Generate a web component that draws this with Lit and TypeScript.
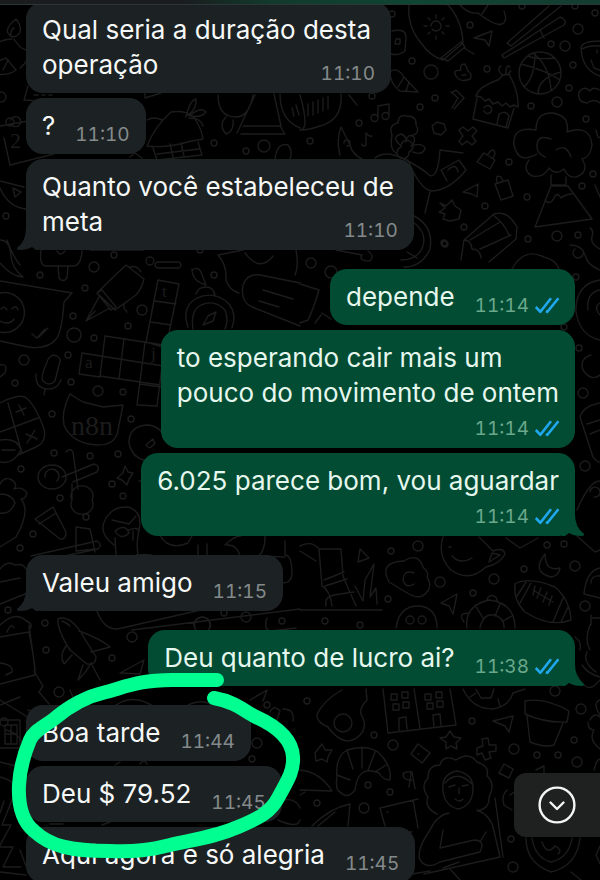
import { LitElement, html, css, svg, nothing } from "lit";
import { customElement, property } from "lit/decorators.js";
import { classMap } from "lit/directives/class-map.js";

interface Message {
  lines: string[];
  time: string;
  out?: boolean;
  tail?: boolean;
  below?: boolean;
}

const MESSAGES: Message[] = [
  { lines: ["Qual seria a duração desta", "operação"], time: "11:10" },
  { lines: ["?"], time: "11:10" },
  { lines: ["Quanto você estabeleceu de", "meta"], time: "11:10", tail: true },
  { lines: ["depende"], time: "11:14", out: true },
  { lines: ["to esperando cair mais um", "pouco do movimento de ontem"], time: "11:14", out: true, below: true },
  { lines: ["6.025 parece bom, vou aguardar"], time: "11:14", out: true, below: true, tail: true },
  { lines: ["Valeu amigo"], time: "11:15", tail: true },
  { lines: ["Deu quanto de lucro ai?"], time: "11:38", out: true, tail: true },
  { lines: ["Boa tarde"], time: "11:44" },
  { lines: ["Deu $ 79.52"], time: "11:45" },
  { lines: ["Aqui agora e só alegria"], time: "11:45" },
];

/* Small bubbles scattered between the doodles: x, y, radius. */
const DOTS: number[][] = [
  [392, 14, 3], [470, 25, 3], [522, 6, 3], [575, 6, 3], [595, 13, 3], [578, 29, 5], [551, 44, 3], [565, 46, 5],
  [412, 61, 3], [431, 72, 7], [487, 69, 3], [573, 65, 3], [569, 88, 3], [435, 98, 3], [420, 107, 3], [372, 96, 3],
  [531, 106, 3], [557, 102, 5], [586, 119, 3], [359, 123, 3], [310, 141, 3], [509, 162, 3], [593, 174, 3],
  [582, 186, 3], [527, 197, 3], [485, 206, 3], [464, 227, 3], [444, 243, 3], [528, 239, 3], [557, 236, 5], [578, 235, 3],
  [1, 97, 5], [10, 122, 4], [214, 143, 3], [246, 151, 3], [264, 146, 6], [6, 216, 3], [200, 250, 3], [114, 255, 3],
  [94, 267, 5], [150, 261, 4], [40, 275, 3], [85, 288, 3], [214, 275, 3], [142, 310, 5], [73, 316, 3], [128, 326, 3],
  [74, 335, 7], [94, 338, 3], [24, 360, 5], [68, 355, 3], [15, 383, 3], [71, 382, 3], [98, 391, 5], [123, 392, 3],
  [52, 414, 3], [131, 419, 3], [54, 453, 3], [90, 456, 3], [118, 454, 3], [21, 469, 3], [112, 484, 3], [123, 496, 3],
  [60, 498, 3], [311, 263, 5], [331, 272, 6], [445, 244, 3], [576, 277, 3], [564, 327, 3], [579, 348, 3], [583, 393, 5],
  [585, 466, 5], [86, 517, 3], [33, 534, 3], [20, 548, 3], [8, 610, 3], [45, 623, 3], [46, 650, 3], [132, 637, 5],
  [112, 658, 3], [246, 617, 5], [202, 625, 8], [224, 613, 3], [282, 621, 3], [59, 692, 5], [391, 551, 3], [418, 546, 5],
  [547, 545, 3], [564, 544, 3], [575, 566, 5], [524, 569, 3], [494, 579, 5], [440, 582, 5], [473, 593, 3], [388, 599, 3],
  [585, 606, 5], [325, 621, 3], [360, 625, 3], [307, 701, 3], [374, 735, 3], [393, 745, 5], [472, 721, 3], [555, 691, 5],
  [581, 709, 5], [514, 749, 5], [537, 755, 3], [558, 755, 3], [574, 740, 3], [577, 762, 5], [390, 792, 3], [368, 785, 3],
  [364, 808, 5], [317, 803, 3], [257, 743, 5], [252, 759, 3], [267, 705, 3], [511, 839, 3], [513, 867, 5], [4, 722, 4],
];

const DOODLES: string[] = [
  /* left edge, top */
  "M8 33 Q5 28 16 19 Q23 28 19 34 Q12 40 8 33 M12 39 Q-4 40 -6 48 M14 39 Q20 49 26 50 M11 37 Q10 30 14 28 M-4 62 L6 58 L16 70 Q8 76 -4 74 M3 70 L8 60 M20 68 Q25 64 26 61",
  "M28 86 L24 100 L54 102 M34 95 h4 m4 0 h3 m4 0 h3 M145 90 l0 8 l16 -5",
  "M0 126 L28 121 M4 138 L10 165 L54 154 M11 120 a5 5 0 1 1 1 5 M0 188 Q8 207 26 209 M0 181 L24 187 M13 188 l8 4 l-6 5 z",
  "M0 240 Q10 240 11 256 Q12 268 23 277 Q12 277 0 263 M7 240 Q12 255 20 265",
  "M0 281 L72 293 L64 302 Q62 330 57 338 Q48 350 28 347 L0 341 M0 293 a20 20 0 1 1 0 39 M1 309 q3 -4 6 1 M12 309 q4 -5 6 1 M0 321 q9 5 14 -2 M32 334 l5 4 l8 -9 M39 337 l9 -9",
  /* thatched hut and palm */
  "M147 146 Q155 126 171 112 Q185 110 194 117 Q202 130 203 139 Q190 141 180 144 Q160 148 147 146 M153 148 l4 12 l45 -5 l-4 -13 M170 144 l3 13 M181 143 l3 13 M157 154 l42 -5 M186 117 q4 -17 10 -18 q1 10 -8 16 M189 116 q12 -10 17 -4 q-5 6 -15 4 M189 118 q12 0 14 8 M147 120 q7 -4 15 0 M130 157 l5 -4 l7 5",
  "M218 95 q0 22 18 22 q13 0 17 -22 M226 117 q-8 8 0 17 q8 -2 7 -14 M255 95 l-18 38 M241 134 h44 l-5 -8 h-37 M274 94 l7 32 M280 94 q0 26 20 34 M292 108 l2 8 M296 105 l3 10",
  "M300 95 Q310 130 300 130 M308 104 v12 M313 102 v13 M318 100 v13 M323 98 v13 M328 96 v13 M341 94 Q343 120 320 126 Q309 130 300 130",
  "M275 159 q2 -17 13 -14 q5 5 2 14 M144 250 L90 250",
  /* lightbulb with sun, star, chopsticks */
  "M409 5 Q407 26 421 43 Q430 56 443 60 L463 43 Q462 20 448 5 M441 58 l20 -16 l4 5 l-17 14 z M464 48 l10 6 M431 26 a5 5 0 1 1 1 3 M436 15 v3 M436 36 v3 M424 26 h3 M446 26 h3 M428 18 l2 2 M444 18 l-2 2 M428 34 l2 -2 M444 34 l-2 -2",
  "M474 38 L492 31 L489 46 L485 40 Z M460 5 q8 9 18 8 q18 14 24 11 q6 -3 2 -13 M482 14 l6 -9",
  "M507 43 L549 6 M511 46 L561 6 M507 43 l4 3 M502 55 L560 17 q8 3 4 8 L504 58 z M540 30 l4 8",
  "M519 73 a21 21 0 1 1 42 0 a21 21 0 1 1 -42 0 M521 64 Q545 70 560 80 M533 53 Q550 66 551 91 M528 56 Q538 60 555 58 M524 87 Q535 77 535 53 M538 94 Q538 78 561 72",
  "M600 41 Q582 41 581 48 Q582 70 600 76 M582 49 Q590 45 600 46 M591 60 l3 8 l6 2 M597 50 v3",
  "M392 31 Q406 28 406 37 L405 51 Q399 56 391 54 M396 39 h4 v5 h-5 z M391 71 Q398 67 404 77 L418 92 L400 91 Q392 85 391 78 M404 77 l-6 10 M409 82 l-3 9",
  "M456 76 q-4 -6 5 -6 q-2 -6 4 -6 l3 7 q5 4 2 8 q-10 4 -14 -3 M462 75 h4",
  /* round hut */
  "M476 96 Q478 87 498 80 L503 75 L509 74 Q519 92 518 107 l-4 -2 l-4 2 l-4 -4 l-4 3 l-4 -4 l-5 2 l-4 -5 l-4 2 l-4 -4 z M477 98 L473 119 L508 128 L514 108 M484 108 a4 4 0 1 1 0 3 M497 124 l2 -10 q7 -4 10 2 l-3 11 M502 75 q-6 -7 -1 -9 M506 74 q0 -11 4 -7 M508 75 q4 -7 2 -3",
  "M600 90 q-7 -4 -10 1 q-6 -6 -11 1 q-2 10 8 11 q7 -5 13 0 M596 130 q2 10 4 7",
  /* notes and flower */
  "M378 118 v-12 l11 -2 v12 M371 118 a3 3 0 1 0 7 0 a3 3 0 1 0 -7 0 M382 116 a3 3 0 1 0 7 0 a3 3 0 1 0 -7 0 M366 145 v-12 q3 4 6 3 M362 144 a2 2 0 1 0 4 0 M349 95 l8 10",
  "M392 135 q-4 -10 6 -12 q0 -9 9 -7 q10 0 9 9 q5 8 -5 11 M401 147 a6 6 0 1 1 8 5 a6 6 0 1 1 -8 -5 M400 145 q-9 -8 1 -11 q6 2 5 8 q2 -10 8 -5 q2 5 -3 9 q10 -4 14 2 q-2 8 -12 4 M392 135 q-3 14 4 18",
  "M340 155 Q336 140 341 127 L350 145 Q352 154 362 159 M344 143 a3 3 0 1 1 3 3",
  "M375 158 Q385 150 402 158 Q422 168 429 175 Q438 180 440 150 L463 153 M408 160 Q420 190 432 191 Q450 190 466 170 L459 160 L441 170 l6 11 M448 170 q8 -8 10 2 M430 192 L425 213",
  "M452 93 q4 -5 7 0 l5 5 l-10 11 M451 92 l7 6 l-6 10",
  "M432 126 l5 -4 l7 2 l2 6 l-5 5 l-7 -2 z M459 130 l4 -3 l5 4 l5 -4 l4 4 l-5 5 l4 5 l-4 4 l-5 -4 l-5 4 l-3 -4 l4 -5 z",
  "M477 162 l7 -9 l11 7 l-5 9 z M488 154 q6 -8 7 0 l-2 4 M495 184 l13 -4 l5 16 l-12 4 z M497 182 q-2 -8 4 -5 l2 4 M463 192 l15 -8 l-1 13 l-5 -3 z",
  /* blossom tree and volcano */
  "M537 154 Q518 165 514 145 Q512 126 536 130 Q536 112 553 113 Q570 116 567 132 Q590 124 592 145 Q590 158 582 159 Q590 172 576 177 Q568 178 564 169 Q556 176 549 168 Q544 178 532 176 Q522 170 529 160 M551 139 Q538 134 537 145 Q536 153 545 157 M556 150 Q566 143 571 157 M551 175 v10 h15 v-8",
  "M551 186 L535 227 L592 219 L568 186 Z M545 200 q5 6 9 -2 q3 -7 7 0 q5 -4 11 -4",
  "M440 203 l6 3 l6 -6 l3 6 l6 4 l-2 9 l-9 2 l-7 -2 l2 -5 l-6 -2 l6 -4 z",
  "M461 260 L464 240 L494 214 Q508 210 517 227 L516 239 L489 262 M470 240 L500 222 M480 249 L511 235 M464 240 q7 0 8 9 q8 0 9 9 M493 215 q11 8 16 20",
  "M412 215 q22 10 18 34 q-8 18 -26 18 M413 222 q14 10 10 24 q-5 14 -22 14 M407 252 l10 6 M336 250 l26 5 q-4 6 8 6 q5 -5 -2 -10",
  "M595 185 l5 12 M590 228 q4 2 2 9 q-2 7 8 12 M570 245 q12 0 15 10 q2 10 15 15 M575 249 a5 5 0 1 0 8 5 M512 269 q12 -22 32 -12 q12 3 15 12",
  /* ice pop, pen, crossword */
  "M41 250 q-2 16 5 16 h27 q8 0 9 -15 M58 266 l1 12 q4 5 8 0 l1 -12 M57 251 q3 6 8 0",
  "M105 285 L126 265 L144 279 Q142 288 136 295 L115 310 L97 293 Z M130 267 q7 -2 11 5 M97 293 l5 -3 l14 17 l-5 3 z M99 297 L86 321 L110 308 M86 321 l9 -10 M126 302 q-5 4 1 10",
  "M158 280 L179 284 L166 348 L146 342 Z M155 301 l21 3 M151 322 l20 3 M105 336 L170 346 M105 336 L100 376 L160 385 M82 353 L163 366 M82 353 l-3 21 l21 3 M124 339 l-5 40 M145 342 L137 405 L157 406 L162 366 M140 384 l21 3",
  "M157 262 h22 q4 3 0 6 h-22 q-4 -3 0 -6 M192 270 q6 -4 9 2 l5 13 M206 285 q-14 -4 -14 -16 M196 294 q2 -7 10 -7 q8 0 9 9 M188 327 q-7 -20 9 -29 q18 -8 32 6 q8 10 3 24 M193 329 q-3 -18 8 -24 q14 -6 24 5 q4 10 0 19 M203 325 l5 -9 l8 -4 l-3 9 z",
  "M218 255 L243 250 M218 255 q9 10 8 25 q3 10 13 13 M245 253 q15 20 28 3 M296 250 q3 16 -1 25 M243 285 q5 -14 22 -9 L300 283 M243 285 q-3 17 9 22 L300 326 M263 290 l30 9 M259 301 l20 6",
  "M300 284 L319 290 Q313 310 308 320 L300 323 M322 313 l9 6 M315 323 l6 -8",
  /* mic, cat, maths keys */
  "M47 362 q3 -9 10 -6 q5 3 2 9 l-4 16 q-6 6 -12 0 q-3 -3 4 -19 M36 374 q-1 14 11 15 q10 1 14 -9 M45 389 l-1 6",
  "M70 394 L83 402 L103 407 L123 405 L118 430 Q116 445 98 445 Q72 444 64 425 Q61 412 70 394",
  "M0 403 q17 -9 25 -6 q10 7 19 32 q3 13 -8 18 l-18 8 M8 403 l14 50 M0 432 l38 -14 M16 412 l10 -4 M19 405 l5 10 M26 434 l11 5 M35 430 l-8 13 M0 440 q17 -3 21 10 q-8 15 -21 12 M2 450 h13",
  "M38 477 a14 12 0 1 1 28 0 a14 12 0 1 1 -28 0 M45 477 a7 7 0 1 1 12 4 M66 452 q4 -5 7 0 l5 37 M62 477 l32 -13 q7 2 3 8 l-24 10 M72 484 v16 M72 500 a11 10 0 1 1 20 0 a11 10 0 1 1 -20 0",
  "M129 443 q0 -18 20 -18 q10 2 14 9 M129 443 q4 20 28 18 M146 445 l7 -6 l2 4 q-6 8 -9 2 M125 466 l3 6 l5 1 l-4 6 l-2 6 l-5 -5 l-5 -2 l6 -5 z M139 481 h6 l-2 10",
  "M0 484 q4 -8 12 -4 q6 4 2 9 q8 -3 13 4 q-1 6 -6 6 q10 12 -5 38 L0 547 M0 494 q12 0 15 9 q-5 12 -15 10",
  "M0 365 q8 -2 5 8 l-5 4",
  /* right column */
  "M600 280 q-25 4 -24 32 q4 24 24 28 M600 290 q-14 3 -12 20 M600 303 q-7 4 0 12 M591 355 q-12 4 -8 15 q8 12 17 5 M600 403 q-17 3 -20 14 l13 40 q5 6 7 5 M587 424 l13 -4 M590 434 l10 -4",
  "M577 510 q13 -30 23 -29 M590 492 a5 5 0 1 1 4 5 M577 536 l18 16 l5 -2 M600 568 q-14 3 -16 26 l16 4 M591 583 q0 -8 9 -7",
  /* tube, woman, bench */
  "M35 519 L53 507 L66 532 Q66 540 60 539 Z M39 524 l17 -11 M76 527 l14 2 l5 23 M76 527 v24 l19 -2 M31 556 L97 541 q6 4 1 8 L31 563",
  "M114 545 Q98 533 105 520 Q112 506 128 507 Q143 511 139 530 Q136 543 138 555 M112 520 l17 4 l7 -8 M115 531 q10 -8 14 2 q-8 8 -14 -2 M129 530 q9 -4 10 2 M133 531 v9 M115 538 l1 17 M136 555 q15 -2 20 2",
  "M0 569 q7 -9 15 -4 q8 -2 11 4 M0 582 l20 -4 M0 604 L35 590 M160 535 q8 16 28 8 l4 -7 M198 545 v13 h9 v-14 M225 545 q9 -9 16 -9 M240 556 q-3 -12 -13 -11 M265 536 q0 16 -7 20 l27 1 M285 541 v14 q7 0 7 20 q-2 10 -12 7",
  "M0 625 q15 -14 25 -5 q10 5 4 9 M0 637 l29 -5 q6 30 6 43 L0 684 M7 632 q4 -10 7 -4 M29 625 l6 44 M0 663 q14 2 12 9 l-6 3",
  "M58 619 Q67 615 78 628 L96 657 Q96 665 87 664 L70 650 Q57 630 58 619 M62 621 q5 2 8 5 M79 631 q22 8 31 16 L91 652 M66 646 q-7 9 -2 18 l8 -9 M83 665 l-5 15 q10 -10 13 -17 l9 17 M34 671 l9 15 l-4 6 l10 12 M70 690 l6 15 l12 -10 M120 673 l24 -13 l-4 14 z",
  "M97 611 Q105 633 122 628 L205 609 M132 630 L300 609 M267 618 q-4 12 4 13 l25 -3 M195 628 a8 8 0 1 1 15 0",
  "M0 700 l29 18 M0 705 l20 -8 M0 720 h20 v28 h-20 M5 725 h12 v19 h-12 z M11 725 v19 M5 734 h12 M28 710 l7 3",
  "M300 546 Q312 540 319 549 L322 586 Q330 590 332 606 M300 551 l16 10 M319 549 h22 L343 576 L348 588 L356 606 M324 580 l20 -8 M325 586 l22 -7 M300 610 L382 610 M326 606 q-2 -9 8 -11 l20 -3 M355 586 l8 15 l2 -21 l9 -16 l-4 33 l6 -9 l1 16",
  "M358 562 l2 -13 l9 9 z M389 582 Q378 562 404 561 Q418 552 423 567 Q430 574 427 577 Q433 586 426 593 Q420 600 409 594 Z M414 573 q-10 -4 -11 7 q3 9 11 4 M396 628 q3 -23 24 -22 q17 2 17 22 M406 620 a4 4 0 1 1 8 0 a4 4 0 1 1 -8 0 M418 620 a4 4 0 1 1 8 0 a4 4 0 1 1 -8 0",
  "M443 537 Q437 556 451 570 Q469 583 486 567 Q500 564 505 554 Q504 547 493 551 L479 537 M452 556 q8 9 20 2 M449 547 h2 M489 562 l3 -9 l8 2 z M506 538 l14 10 l18 -10",
  "M545 554 q-14 18 6 23 q8 -1 9 -9 q-15 4 -15 -14 M441 603 L457 594 L453 614 L449 606 Z",
  "M515 584 Q528 576 555 587 Q570 600 571 620 Q550 628 525 612 Q513 600 515 584 M531 583 l-11 20 M526 582 l-9 14 M563 598 l-10 24 M568 607 l-7 15 M533 590 l20 12 M535 586 l-2 9 M541 588 l-4 10 M547 592 l-4 10 M552 596 l-3 9",
  "M467 628 q-3 -22 22 -28 q26 3 26 28 M480 628 q3 -15 15 -13 q10 4 9 13 M487 600 a5 5 0 1 1 10 1 M464 622 q-7 -9 5 -9 M475 605 l8 13 M500 604 l-5 12 M512 616 l-9 5",
  "M591 615 v10 M600 618 h-9 M590 625 q-6 15 0 25 M587 652 q-5 10 9 20 M575 637 q7 5 5 13 M582 665 q6 9 18 12 M577 675 q9 18 18 10 l5 -5",
  /* lower right */
  "M342 690 Q325 699 317 714 Q316 722 328 727 Q345 750 360 735 Q367 728 363 718 Q357 710 367 700 L366 689 M334 723 a9 9 0 1 1 18 0 a9 9 0 1 1 -18 0",
  "M383 689 L388 733 L456 725 L450 689 M414 689 l6 39 M391 694 h6 v6 h-6 z M402 692 h6 v6 h-6 z M393 704 h6 v6 h-6 z M403 702 h6 v6 h-6 z M425 694 h6 v6 h-6 z M436 692 h6 v6 h-6 z M427 703 h6 v6 h-6 z M437 701 h6 v6 h-6 z M399 731 v-13 l7 -1 l1 12 M434 727 l-1 -12 l7 -1 l1 12",
  "M463 689 q9 20 30 20 q16 -3 20 -16 l12 -4 M476 689 l5 9 h10 l3 -9 M470 697 l6 -4 M500 706 l-2 -7",
  "M525 701 Q545 697 569 711 L567 722 Q545 723 525 714 Z M527 716 L530 742 Q545 748 554 745 L563 723 M493 721 l20 -5 l-4 16 l-4 -6 z",
  "M600 700 q-8 3 0 15 M590 720 q4 -8 10 -3 M588 722 q0 8 6 8 q-6 10 6 19 M594 770 q2 -10 6 -11",
  "M315 753 l7 -9 l3 6 l7 0 l-4 7 l-1 5 l-5 -3 l-6 2 z M446 737 l4 -6 l4 6 l7 1 l-5 5 l1 6 l-6 -3 l-5 3 v-7 l-6 -4 z M477 748 l6 -2 l-1 -7 l6 -1 l1 7 l7 0 v6 l-7 1 l2 6 l-6 2 l-3 -7 l-5 2 z",
  "M411 754 l7 -10 l12 9 l-8 10 z M418 754 h1 M499 773 l5 -9 l9 5 l-4 9 z",
  "M337 777 Q335 757 347 750 Q365 744 378 752 Q392 765 390 780 Q383 780 379 773 Q358 764 355 790 Q347 800 340 792 Q335 790 337 777 M347 750 l6 19 M362 748 l0 20 M375 752 l-7 18 M386 765 l-11 7 M337 775 l13 5",
  "M300 770 Q320 772 332 791 L300 790 M403 775 q0 -4 9 -3 l3 17 M404 773 q-3 7 8 7 M411 773 l-2 14 M300 795 l5 -3 M312 826 Q330 808 350 804 L348 826 M318 826 l17 -14",
  /* woman at a laptop */
  "M437 814 Q424 808 428 797 Q420 786 428 778 Q428 765 440 765 Q443 754 456 760 Q469 751 477 762 Q490 766 487 776 Q496 784 489 797 Q490 808 478 811 M443 791 Q441 774 457 771 Q474 774 473 790 Q472 806 458 809 Q445 806 443 791 M449 787 l6 -2 M462 786 l6 -1 M459 788 v6 M455 799 q5 4 8 0 M445 783 q12 -14 27 1",
  "M449 813 Q437 815 430 830 Q416 850 420 860 Q427 870 440 862 L480 852 Q486 840 474 840 L440 848 M440 848 l3 -18 M477 810 Q490 815 493 827 L500 857 L424 874 M380 808 L418 799 M380 808 l5 18 M413 800 l5 28 M387 812 h1 M400 832 h12 M480 842 l6 -10 M495 798 l8 59 M459 862 l-16 6 M450 869 l10 11 M400 876 l30 -5",
  "M526 838 q0 25 25 34 q26 -6 29 -34 M532 838 q3 20 19 24 q18 -4 21 -24 M542 842 q5 14 13 4 q8 4 3 8 M507 790 q-6 6 -3 15 l8 5 M536 770 l8 -4 v7 M571 872 l10 8 M600 846 l-4 9 l4 9 M510 795 l4 -3",
  /* lower left */
  "M22 742 q-6 -10 -16 -12 M0 762 l20 5 M0 777 q12 3 16 10 M4 801 l-4 12 M12 800 l-10 25 l9 0 l-12 22 l14 0 l-10 20 h18 M20 850 l6 16 M0 872 l26 3",
  "M115 765 l5 -3 M140 764 q4 -6 7 0 M270 712 q4 -8 10 -1 l-4 11 M283 709 q12 0 10 12 M250 700 l17 -10 l-4 11 M110 710 q20 -20 46 -2 M180 710 q20 -14 33 -4 M278 820 q20 9 22 0 M284 800 q12 -2 16 8 M50 824 h13 M102 825 l8 -3",
];

const glyph = (x: number, y: number, size: number, text: string) =>
  svg`<text class="scrawl" x=${x} y=${y} font-size=${size}>${text}</text>`;

@customElement("chat-wallpaper")
class ChatWallpaper extends LitElement {
  static styles = css`
    :host {
      position: absolute;
      inset: 0;
    }
    svg {
      display: block;
      width: 100%;
      height: 100%;
      fill: none;
      stroke: #1c1c1c;
      stroke-width: 1.4;
      stroke-linecap: round;
      stroke-linejoin: round;
    }
    .scrawl {
      fill: #1c1c1c;
      stroke: none;
      font-family: "Liberation Serif", serif;
    }
  `;
  render() {
    return html`<svg viewBox="0 0 600 880" preserveAspectRatio="xMinYMin slice" aria-hidden="true">
      ${DOODLES.map((d) => svg`<path d=${d} />`)}
      ${DOTS.map(([x, y, r]) => svg`<circle cx=${x} cy=${y} r=${r} />`)}
      ${glyph(10, 148, 22, "2")}${glyph(162, 297, 17, "t")}${glyph(85, 368, 17, "a")}
      ${glyph(151, 359, 17, "j")}${glyph(71, 435, 28, "n8n")}
    </svg>`;
  }
}

@customElement("chat-bubble")
class ChatBubble extends LitElement {
  @property({ attribute: false }) message!: Message;

  static styles = css`
    :host {
      display: flex;
    }
    .bubble {
      position: relative;
      box-sizing: border-box;
      padding: 10px 16px 8px;
      border-radius: 17px;
      background: #1c2223;
      color: #f6f8f8;
      font-size: 26px;
      line-height: 35px;
    }
    .out {
      margin-left: auto;
      background: #014c33;
      color: #e6f7ee;
    }
    .line {
      margin: 0;
      white-space: nowrap;
    }
    .wide {
      padding-right: 4px;
    }
    .last {
      display: flex;
      justify-content: space-between;
      gap: 20px;
    }
    .meta {
      display: flex;
      align-items: center;
      justify-content: flex-end;
      gap: 6px;
      height: 22px;
      margin-top: 8px;
      color: #848a8b;
      font-size: 19px;
      line-height: 22px;
      font-variant-numeric: tabular-nums;
    }
    .last .meta {
      margin-top: 16px;
    }
    .out .meta {
      color: #6aa78b;
    }
    .checks {
      width: 24px;
      height: 18px;
      fill: none;
      stroke: #20a8ee;
      stroke-width: 2.6;
      stroke-linejoin: round;
      overflow: visible;
    }
    .tail {
      position: absolute;
      bottom: 0;
      left: -9px;
      width: 22px;
      height: 26px;
      fill: #1c2223;
    }
    .out .tail {
      left: auto;
      right: -9px;
      fill: #014c33;
      transform: scaleX(-1);
    }
  `;

  render() {
    const { lines, time, out, tail, below } = this.message;
    const meta = html`<span class="meta">
      <time>${time}</time>
      ${out
        ? html`<svg class="checks" viewBox="0 0 24 18" role="img" aria-label="Lida">
            <path d="M0.8 10 L5.4 14.8 L16 1.2 M11 14 L12.4 14.8 L23.4 1.2" />
          </svg>`
        : nothing}
    </span>`;
    const full = below ? lines : lines.slice(0, -1);
    return html`<div class=${classMap({ bubble: true, out: !!out })}>
      ${tail
        ? html`<svg class="tail" viewBox="0 0 22 26" aria-hidden="true">
            <path d="M9 0 Q10 17 0 24 Q-1 26 3 26 Q10 26 15 23 L19 26 L22 26 L22 0 Z" />
          </svg>`
        : nothing}
      ${full.map((l) => html`<p class=${classMap({ line: true, wide: !out })}>${l}</p>`)}
      ${below ? meta : html`<div class="last"><p class="line">${lines[lines.length - 1]}</p>${meta}</div>`}
    </div>`;
  }
}

@customElement("app-root")
class AppRoot extends LitElement {
  static styles = css`
    :host {
      display: block;
      position: relative;
      height: 100vh;
      overflow: hidden;
      background: #000000;
      font-family: Inter, "Liberation Sans", sans-serif;
    }
    .edge {
      position: absolute;
      inset: 0 0 auto;
      height: 4px;
      border-bottom: 1px solid #2b3735;
      background: linear-gradient(90deg, #1a1c1d 30%, #123a2d 45%, #0f4533 70%, #143c30);
    }
    .thread {
      position: relative;
      display: flex;
      flex-direction: column;
      gap: 5px;
      margin: 0;
      padding: 2px 25px 0 26px;
      list-style: none;
    }
    .ends {
      margin-bottom: 14px;
    }
    .mark {
      position: absolute;
      left: 0;
      top: 660px;
      width: 310px;
      height: 210px;
      fill: none;
      stroke: #00ff90;
      stroke-width: 14;
      stroke-linecap: round;
      stroke-linejoin: round;
      pointer-events: none;
    }
    .jump {
      position: absolute;
      right: 0;
      bottom: 43px;
      display: flex;
      align-items: center;
      width: 86px;
      height: 64px;
      padding: 0 0 0 24px;
      border: 0;
      border-radius: 12px 0 0 12px;
      background: #1f2121;
      cursor: pointer;
    }
    .jump svg {
      width: 38px;
      height: 38px;
      fill: none;
      stroke: #f4f5f5;
      stroke-width: 2.4;
      stroke-linecap: round;
      stroke-linejoin: round;
    }
  `;

  render() {
    return html`
      <chat-wallpaper></chat-wallpaper>
      <ol class="thread">
        ${MESSAGES.map(
          (m, i) => html`<li class=${classMap({ ends: !!MESSAGES[i + 1] && !!MESSAGES[i + 1].out !== !!m.out })}>
            <chat-bubble .message=${m}></chat-bubble>
          </li>`
        )}
      </ol>
      <div class="edge"></div>
      <svg class="mark" viewBox="0 0 310 210" aria-hidden="true">
        <path
          d="M217 20 L172 20 C140 20 125 27 106 32 C84 37 68 47 54 59 C42 68 34 71 30 80 C24 94 20 108 19 125 C18 146 22 161 34 171 C50 186 70 191 110 191 C135 192 150 190 170 185 C196 179 215 177 238 167 C262 157 271 151 278 138 C286 123 294 112 293 97 C292 78 276 66 256 57 C244 51 236 42 214 38"
        />
      </svg>
      <button class="jump" type="button" aria-label="Ir para as mensagens mais recentes">
        <svg viewBox="0 0 38 38" aria-hidden="true">
          <circle cx="19" cy="19" r="17.4" />
          <path d="M12.5 16.5 L19 23 L25.5 16.5" />
        </svg>
      </button>
    `;
  }
}
